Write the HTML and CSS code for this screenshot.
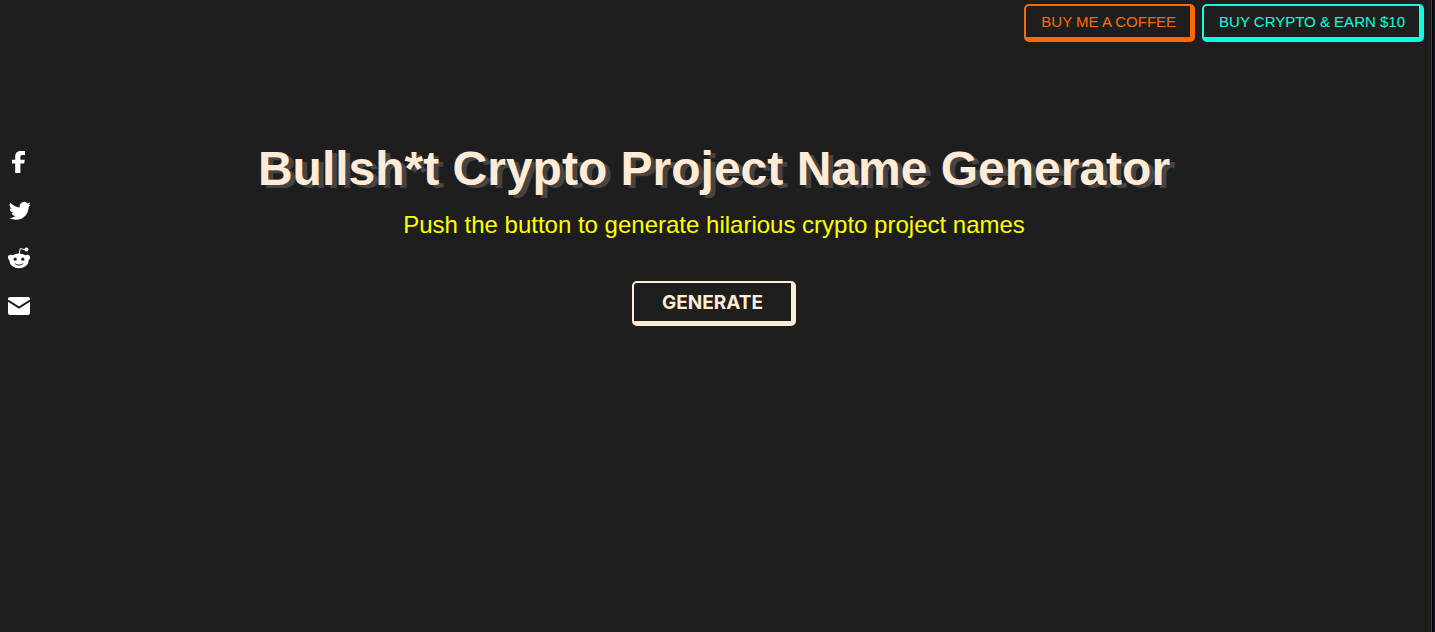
FILE: index.html
```
<!DOCTYPE html>
<html lang="en">
<head>
    <meta charset="UTF-8">
    <meta name="viewport" content="width=device-width, initial-scale=1.0">
    <title>Bullsh*t Crypto Project Name Generator</title>
    <link rel="stylesheet" href="styles.css">
</head>
<body>
    <div class="page">
        <!-- Top links -->
        <header class="top-bar">
            <a class="top-link coffee" href="#">BUY ME A COFFEE</a>
            <a class="top-link crypto" href="#">BUY CRYPTO &amp; EARN $10</a>
        </header>

        <!-- Share icons -->
        <nav class="share">
            <a href="#" aria-label="Share on Facebook">
                <svg viewBox="0 0 22 24"><path d="M7.2 23V13.6H4V9.8h3.2V6.7C7.2 3.3 9.2 1 12.6 1H17v4h-2.4c-1.6 0-2.2.7-2.2 2v2.8h4.4l-.6 3.8h-3.8V23z"/></svg>
            </a>
            <a href="#" aria-label="Share on Twitter">
                <svg viewBox="-1 -1 24 24"><path d="M23.95 4.57a10 10 0 0 1-2.82.77 4.96 4.96 0 0 0 2.16-2.72c-.95.55-2 .96-3.13 1.18a4.92 4.92 0 0 0-8.38 4.48C7.69 8.1 4.07 6.13 1.64 3.16a4.92 4.92 0 0 0 1.52 6.57 4.9 4.9 0 0 1-2.23-.61v.06a4.92 4.92 0 0 0 3.95 4.83 5 5 0 0 1-2.21.08 4.94 4.94 0 0 0 4.6 3.42A9.87 9.87 0 0 1 0 19.54a14 14 0 0 0 7.55 2.21c9.05 0 14-7.5 14-13.98 0-.21 0-.42-.02-.63a9.94 9.94 0 0 0 2.42-2.57z"/></svg>
            </a>
            <a href="#" aria-label="Share on Reddit">
                <svg viewBox="0 0 22 22">
                    <path class="line" d="M11 8l1.2-6.4 5 1.1"/>
                    <circle cx="18.4" cy="2.4" r="2"/>
                    <circle cx="2.6" cy="10.4" r="2.6"/>
                    <circle cx="19.4" cy="10.4" r="2.6"/>
                    <ellipse cx="11" cy="13.8" rx="9.6" ry="7.4"/>
                    <circle class="hole" cx="7.2" cy="12.2" r="1.6"/>
                    <circle class="hole" cx="14.8" cy="12.2" r="1.6"/>
                    <path class="smile" d="M6.8 16.4c2.2 2.2 6.2 2.2 8.4 0"/>
                </svg>
            </a>
            <a href="#" aria-label="Share by email">
                <svg viewBox="0 0 22 22">
                    <rect x="0" y="2" width="22" height="18" rx="2"/>
                    <path class="flap" d="M0 5.5l11 7 11-7"/>
                </svg>
            </a>
        </nav>

        <main class="container">
            <h1>Bullsh*t Crypto Project Name Generator</h1>
            <p class="subtitle">Push the button to generate hilarious crypto project names</p>
            <button class="generate" type="button">GENERATE</button>
        </main>
    </div>
</body>
</html>
```
FILE: styles.css
```
* {
    box-sizing: border-box;
}

body {
    margin: 0;
    background-color: #0b0b33;
    font-family: "Liberation Sans", Helvetica, Arial, sans-serif;
    padding-right: 2px;
}

.page {
    position: relative;
    min-height: 100vh;
    background-color: #1e1e1e;
    border-right: 1px solid #000;
    box-shadow: inset -1px 0 0 #444;
    padding: 4px 8px 0 4px;
}

.top-bar {
    display: flex;
    justify-content: flex-end;
    gap: 7px;
}

.top-link {
    padding: 9px 14px 8px 15px;
    border: 2px solid;
    border-right-width: 5px;
    border-bottom-width: 5px;
    border-radius: 5px;
    font-size: 15px;
    line-height: 14px;
    text-decoration: none;
}

.coffee {
    color: #ff6a00;
}

.crypto {
    color: #0fffdb;
}

/* Share icons on the left side */
.share {
    position: absolute;
    top: 150px;
    left: 8px;
    display: flex;
    flex-direction: column;
    gap: 24px;
}

.share a {
    display: block;
    width: 22px;
    height: 24px;
}

.share svg {
    display: block;
    width: 22px;
    height: 24px;
    fill: #fff;
}

.share .line {
    fill: none;
    stroke: #fff;
    stroke-width: 1;
}

.share .hole {
    fill: #1e1e1e;
}

.share .smile {
    fill: none;
    stroke: #1e1e1e;
    stroke-width: 1;
}

.share .flap {
    fill: none;
    stroke: #1e1e1e;
    stroke-width: 2;
}

.container {
    padding-top: 99px;
    text-align: center;
}

h1 {
    margin: 0;
    color: #ffebd6;
    font-size: 48px;
    line-height: 56px;
    text-shadow: 5px 3px 0 #444;
}

.subtitle {
    margin: 14px 0 42px;
    color: #ff0;
    font-size: 24px;
    line-height: 28px;
}

.generate {
    padding: 9px 28px 7px;
    background: none;
    color: #ffebd6;
    border: 2px solid #ffebd6;
    border-right-width: 5px;
    border-bottom-width: 5px;
    border-radius: 5px;
    font-family: Inter, sans-serif;
    font-size: 19px;
    font-weight: bold;
    line-height: 22px;
    cursor: pointer;
}
```
